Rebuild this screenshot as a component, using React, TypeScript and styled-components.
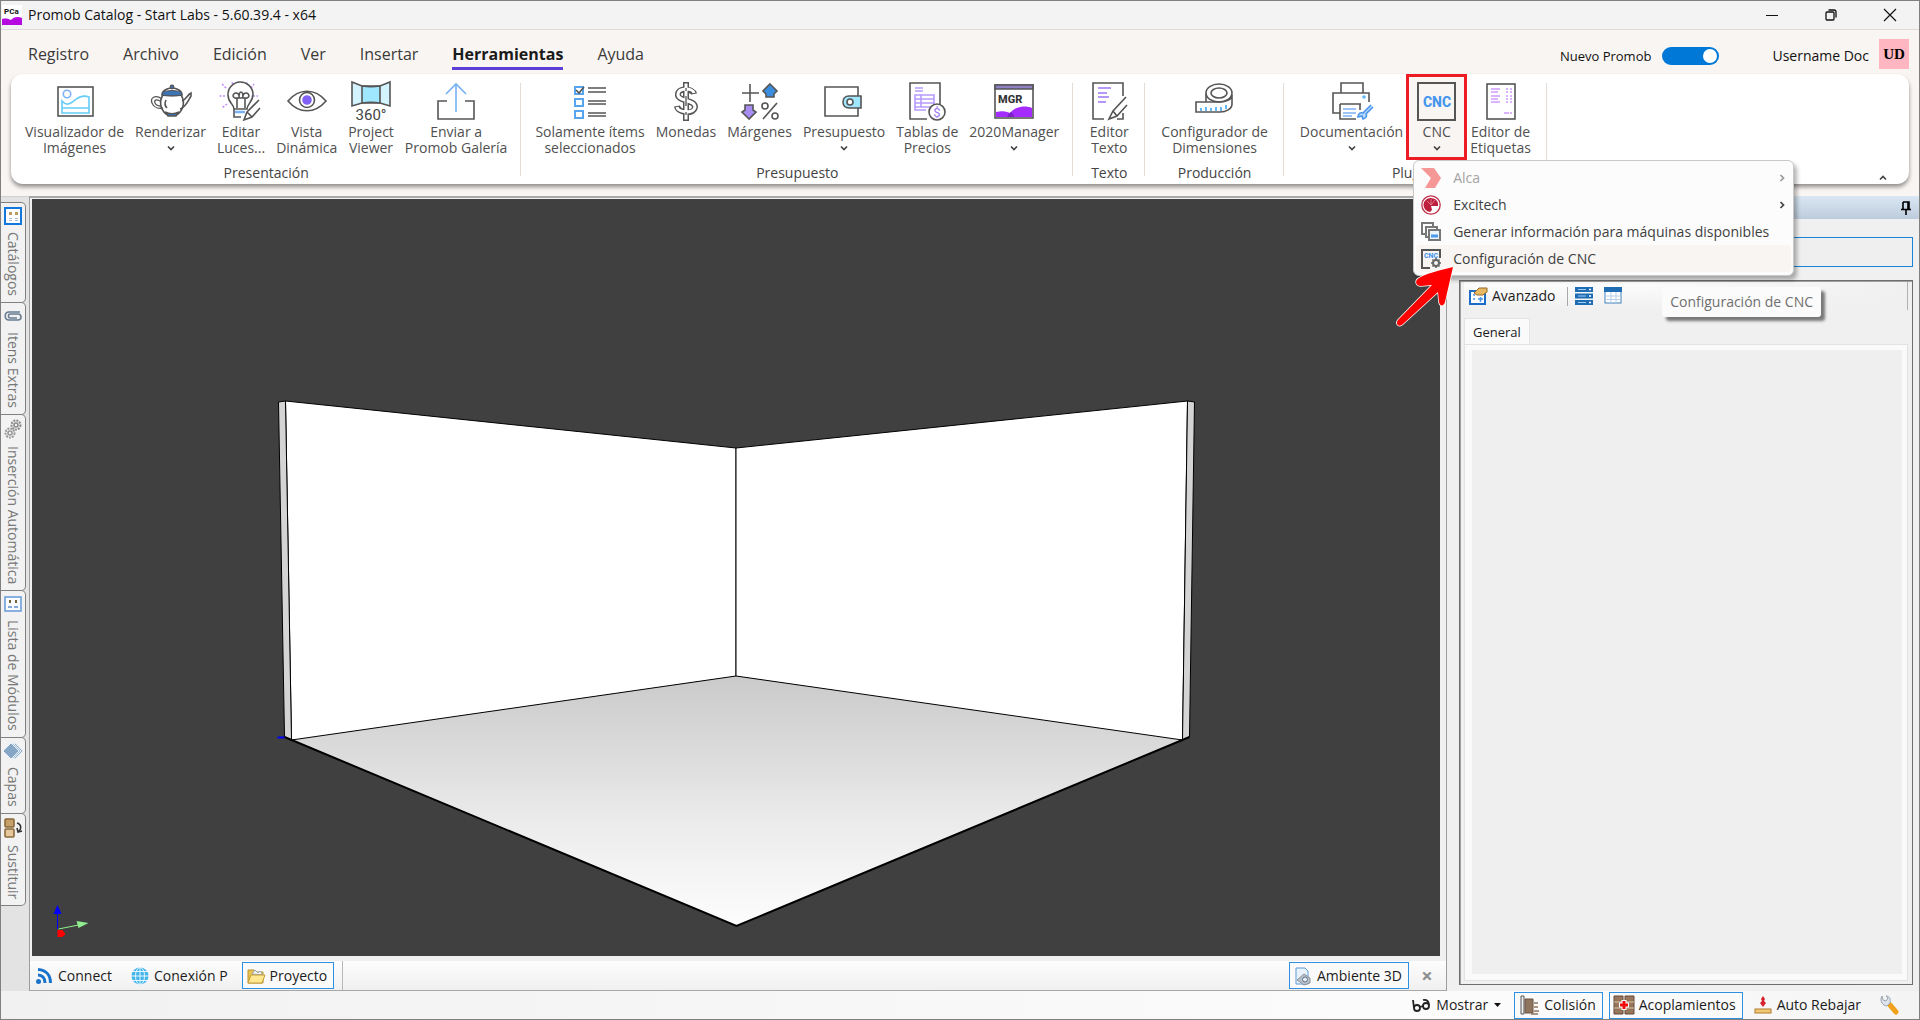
import React from "react";
import styled, { createGlobalStyle, css } from "styled-components";

const GlobalStyle = createGlobalStyle`
  * { box-sizing: border-box; }
  body { margin: 0; font-family: "Open Sans", "Noto Sans", sans-serif; font-size: 14px; color: #1b1b1b; }
  button, input { font: inherit; color: inherit; }
  button { background: none; border: 0; padding: 0; }
  svg { display: block; flex: none; overflow: visible; }
`;

/* ---------- frame ---------- */

const Window = styled.div`
  display: flex;
  flex-direction: column;
  min-height: 100vh;
  border: 1px solid #808080;
  background: #f0f0f0;
  overflow: hidden;
`;

const TitleBar = styled.header`
  display: flex;
  align-items: center;
  height: 29px;
  background: #f3f3f3;
  border-bottom: 1px solid #dcdcdc;
  padding-left: 1px;
`;

const Title = styled.h1`
  flex: 1;
  margin: 0 0 0 6px;
  font-size: 14px;
  line-height: 20px;
  font-weight: 400;
  color: #111;
`;

const WindowButton = styled.button`
  display: flex;
  align-items: center;
  justify-content: center;
  width: 59px;
  height: 28px;
`;

/* ---------- menu bar ---------- */

const RibbonArea = styled.div`
  background: #f9f5f3;
  padding: 0 10px 12px;
`;

const TabRow = styled.nav`
  display: flex;
  align-items: center;
  height: 44px;
  padding: 4px 0 0 17px;
  gap: 34px;
`;

const Tab = styled.a<{ $active?: boolean }>`
  height: 32px;
  padding-top: 2px;
  font-size: 16px;
  line-height: 28px;
  text-decoration: none;
  color: #3b3a39;
  ${(p) =>
    p.$active &&
    css`
      font-weight: 700;
      color: #1b1b1b;
      border-bottom: 3px solid #5b3fd6;
    `}
`;

const Account = styled.div`
  display: flex;
  align-items: center;
  margin-left: auto;
  color: #111;
`;

const SwitchLabel = styled.label`
  display: flex;
  align-items: center;
  gap: 11px;
  margin-right: 53px;
  padding-top: 3px;
  font-size: 13px;
`;

const UserName = styled.span`
  padding-top: 3px;
`;

const Switch = styled.input`
  appearance: none;
  display: flex;
  align-items: center;
  justify-content: flex-end;
  width: 57px;
  height: 18px;
  margin: 0;
  padding: 0 2px;
  border-radius: 9px;
  background: #0078d7;
  &::after {
    content: "";
    width: 14px;
    height: 14px;
    border-radius: 50%;
    background: #fff;
  }
`;

const Avatar = styled.span`
  display: grid;
  place-items: center;
  width: 30px;
  height: 30px;
  margin-left: 10px;
  background: #ffb6c1;
  font-family: "Liberation Serif", serif;
  font-size: 15px;
  font-weight: 700;
  line-height: 18px;
  color: #000;
`;

/* ---------- ribbon ---------- */

const Ribbon = styled.div`
  display: flex;
  position: relative;
  height: 110px;
  padding-right: 20px;
  background: #fff;
  border-radius: 12px;
  box-shadow: 0 3px 4px rgba(0, 0, 0, 0.42);
`;

const Group = styled.section<{ $roomy?: boolean }>`
  display: flex;
  flex-direction: column;
  align-items: center;
  padding: 0 ${(p) => (p.$roomy ? "11px" : "9px")};
  background: linear-gradient(#e6dcd6, #e6dcd6) right 9px / 1px 93px no-repeat;
`;

const GroupItems = styled.div`
  display: flex;
  gap: 1px;
`;

const GroupName = styled.h2`
  margin: 5px 0 0;
  font-size: 14px;
  line-height: 16px;
  font-weight: 400;
  color: #444;
`;

const ToolHolder = styled.div<{ $marked?: boolean }>`
  position: relative;
  margin: 0 ${(p) => (p.$marked ? "-3px" : "0")};
`;

const ToolButton = styled.button<{ $marked?: boolean }>`
  display: flex;
  flex-direction: column;
  align-items: center;
  height: 86px;
  min-width: ${(p) => (p.$marked ? "61px" : "0")};
  padding: 5px 2px 0;
  border: 3px solid ${(p) => (p.$marked ? "#ed1c24" : "transparent")};
  background: ${(p) => (p.$marked ? "#f9f5f3" : "none")};
  font-size: 14px;
  line-height: 16px;
  color: #505050;
`;

const ToolLabel = styled.span`
  margin-top: 2px;
  white-space: pre-line;
`;

const DropMark = styled.span`
  display: grid;
  place-items: center;
  height: 16px;
`;

const Collapse = styled.button`
  align-self: flex-end;
  margin: 0 2px 2px auto;
`;

/* ---------- drop-down ---------- */

const Menu = styled.ul`
  position: absolute;
  z-index: 5;
  left: 7px;
  top: 86px;
  width: 381px;
  margin: 0;
  padding: 3px 2px;
  list-style: none;
  background: #fcfcfc;
  border: 1px solid #c9c9c9;
  border-radius: 6px;
  box-shadow: 3px 4px 4px rgba(0, 0, 0, 0.3);
`;

const MenuItem = styled.button<{ $hot?: boolean; $off?: boolean }>`
  display: flex;
  align-items: center;
  gap: 12px;
  width: 100%;
  height: 27px;
  padding: 0 5px;
  border-radius: 4px;
  text-align: left;
  font-size: 14px;
  background: ${(p) => (p.$hot ? "#f9f5f3" : "none")};
  color: ${(p) => (p.$off ? "#a3a3a3" : "#3f3f3f")};
`;

const MenuText = styled.span`
  flex: 1;
  white-space: nowrap;
`;

const Tooltip = styled.div`
  position: absolute;
  z-index: 6;
  left: 256px;
  top: 213px;
  padding: 5px 8px;
  background: #fbfbfb;
  border-radius: 3px;
  box-shadow: 4px 4px 3px rgba(0, 0, 0, 0.5);
  font-size: 14px;
  line-height: 20px;
  white-space: nowrap;
  color: #6f6f6f;
`;

const Pointer = styled.svg`
  position: absolute;
  z-index: 7;
  left: -12px;
  top: 190px;
`;

/* ---------- body ---------- */

const Body = styled.main`
  display: flex;
  flex: 1;
  min-height: 600px;
`;

const SideBar = styled.div`
  width: 28px;
  flex: none;
  padding-top: 5px;
  background: #e3e3e3;
  border-top: 1px solid #d0d0d0;
`;

const SideTab = styled.button`
  display: flex;
  align-items: center;
  gap: 7px;
  writing-mode: vertical-rl;
  width: 25px;
  padding: 4px 0 6px;
  background: #f2f2f2;
  border: 1px solid #808080;
  border-left: 0;
  border-radius: 0 5px 5px 0;
  margin-bottom: -1px;
  font-size: 14px;
  line-height: 22px;
  color: #777;
`;

const Stage = styled.section`
  display: flex;
  flex-direction: column;
  flex: 1;
  min-width: 0;
  border: 1px solid #9c9c9c;
  border-width: 2px 1px 1px;
  border-color: #a8a8a8 #9c9c9c;
`;

const Viewport = styled.div`
  flex: 1;
  min-height: 0;
  margin: 1px 6px 0 2px;
  background: #404040;
  overflow: hidden;
  svg { width: 100%; height: 756px; }
`;

const DocBar = styled.div`
  display: flex;
  align-items: center;
  height: 34px;
  padding: 5px 0 0;
  background: linear-gradient(#f0f0f0 5px, #fdfdfd 5px, #f0f0f0);
`;

const DocSet = styled.div<{ $edge?: boolean }>`
  display: flex;
  align-items: center;
  gap: 7px;
  height: 29px;
  padding: 0 8px 0 0;
  border-right: ${(p) => (p.$edge ? "1px solid #b8b8b8" : "0")};
`;

const Spacer = styled.div`
  flex: 1;
`;

const BarButton = styled.button<{ $on?: boolean }>`
  display: flex;
  align-items: center;
  gap: 5px;
  height: 27px;
  padding: 0 6px 0 4px;
  border: 1px solid ${(p) => (p.$on ? "#2f8fe0" : "transparent")};
  background: ${(p) => (p.$on ? "#fafafa" : "none")};
  font-size: 14px;
  line-height: 20px;
  white-space: nowrap;
`;

const CloseDoc = styled.button`
  width: 22px;
  height: 24px;
  font-size: 20px;
  line-height: 22px;
  font-weight: 700;
  color: #8d8d8d;
`;

/* ---------- properties panel ---------- */

const Properties = styled.aside`
  display: flex;
  flex-direction: column;
  flex: 0 0 472px;
  padding: 0 0 6px;
`;

const PanelHead = styled.div`
  display: flex;
  align-items: center;
  justify-content: flex-end;
  height: 23px;
  padding-right: 7px;
  margin-left: 6px;
  background: linear-gradient(#dae6f3, #bdccdc);
`;

const SearchBox = styled.input`
  height: 30px;
  margin: 18px 6px 13px 12px;
  border: 1px solid #1883d7;
  background: #efefef;
`;

const PanelBox = styled.div`
  display: flex;
  flex-direction: column;
  flex: 1;
  margin: 0 6px 0 12px;
  padding: 1px 4px 3px;
  border: 1px solid #6e6e6e;
  box-shadow: inset 1px 1px 0 #a0a0a0;
`;

const PanelTools = styled.div`
  display: flex;
  align-items: center;
  height: 28px;
  background: linear-gradient(90deg, rgba(240, 240, 240, 0) 40%, #f0f0f0), linear-gradient(#fdfdfd, #f0f0f0);
  border-right: 1px solid #b0b0b0;
`;

const ToolSep = styled.span`
  width: 1px;
  height: 19px;
  margin: 0 7px 0 4px;
  background: #a8a8a8;
`;

const IconButton = styled.button`
  margin-right: 11px;
`;

const PageTab = styled.button`
  align-self: flex-start;
  height: 26px;
  margin-top: 8px;
  padding: 0 8px;
  background: #fafafa;
  border: 1px solid #e3e3e3;
  border-bottom: 0;
  font-size: 13px;
`;

const PagePane = styled.div`
  flex: 1;
  padding: 5px 5px 6px 7px;
  background: #fafafa;
  border: 1px solid #e3e3e3;
`;

const PageBody = styled.div`
  height: 100%;
  background: #efefef;
`;

/* ---------- status bar ---------- */

const StatusBar = styled.footer`
  display: flex;
  justify-content: flex-end;
  align-items: center;
  gap: 6px;
  height: 28px;
  padding-right: 13px;
  background: linear-gradient(90deg, #f1f1f1, #fcfcfc 80%, #f4f4f4);
`;

/* ---------- icons ---------- */

const S = "#555";
const Ic = ({ children, w = 40, h = 40 }: { children: React.ReactNode; w?: number; h?: number }) => (
  <svg width={w} height={h} viewBox={`0 0 ${w} ${h}`} fill="none" stroke={S} strokeWidth="1.6" aria-hidden="true">
    {children}
  </svg>
);

const ImageIcon = () => (
  <Ic>
    <rect x="3" y="5" width="35" height="29" />
    <circle cx="12" cy="12" r="3.7" stroke="#7db1f7" />
    <path d="M7 19c5 6 9 2 13-1c5-4 9-5 14-3v16H7Z M7 26h27" stroke="#66ccf8" />
  </Ic>
);
const TeapotIcon = () => (
  <Ic>
    <path d="M12 13h18c4 6 3 14-3 19H15C9 27 8 19 12 13Z" />
    <path d="M11 17c-7-5-12-1-10 4c2 5 7 6 11 5M9 19c-4-2-6-1-5 2c1 2 3 3 6 3" strokeWidth="1.3" />
    <path d="M31 19c4-1 5-6 9-8v3c-3 5-5 11-11 13" />
    <path d="M11 13c0-4 5-7 10-7s10 3 10 7c-5 1-15 1-20 0Z" fill="#fff" />
    <path d="M12 10c6-2 12-2 18 0l1 3c-5 1-15 1-20 0Z" fill="#3c74b4" strokeWidth="1" />
    <circle cx="21" cy="5" r="1.8" fill="#3f6ea8" strokeWidth="1.2" />
    <path d="M14 30c4 2 10 2 14 0l-3 4h-8Z" fill="#3c74b4" />
    <path d="M15 18c-2 4-1 6 1 8" />
  </Ic>
);
const BulbIcon = () => (
  <Ic>
    <path d="M4 14H-2M5 6L1 2M12 2l-2-3M32 14h5M30 6l3-4M25 2l2-3M6 22l-5 4" stroke="#c48bff" strokeDasharray="2 1.5" />
    <path d="M13 27c0-5-6-6-6-14a12 12 0 0 1 25-1c0 8-6 10-6 15Z" />
    <path d="M16 26V16c-5 1-5-5-1-5s3 5 3 5s0-6 2-6s2 6 2 6s-1-5 3-5s4 6-1 5v10M14 16h12" />
    <path d="M14 30h10" stroke="#7db1f7" strokeWidth="2.5" />
    <path d="M13 27v8h7" />
    <path d="M38 18L26 30l-3 8l8-3l8-9M26 30l5 5" fill="#fff" />
  </Ic>
);
const EyeIcon = () => (
  <Ic>
    <path d="M1 19c11-13 27-13 38 0c-11 13-27 13-38 0Z" />
    <circle cx="20" cy="18" r="7.5" />
    <circle cx="20" cy="18" r="4" fill="#8161f5" stroke="#8161f5" />
  </Ic>
);
const ViewerIcon = () => (
  <Ic>
    <path d="M1 0l10 4h18l10-4v24l-10-3H11L1 24Z" fill="#d3f3ff" />
    <path d="M11 4c6 1 12 1 18 0v17c-6-1-12-1-18 0Z" fill="#9fe6ff" />
    <text x="20" y="38" textAnchor="middle" fill="#444" stroke="none" fontFamily="Roboto" fontSize="15">360°</text>
  </Ic>
);
const UploadIcon = () => (
  <Ic>
    <path d="M11 19H2v18h36V19h-9" />
    <path d="M20 30V2M10 12L20 2l10 10" stroke="#78b1f2" />
  </Ic>
);
const ChecksIcon = () => (
  <Ic>
    <path d="M5 5h8v7H5ZM5 17h8v7H5ZM5 29h8v7H5Z" stroke="#56a5ee" strokeWidth="2" />
    <path d="M6 8l3 3l5-6" />
    <path d="M18 6h18M18 10h18M18 19h18M18 22h18M18 31h18M18 34h18" />
  </Ic>
);
const DollarIcon = () => (
  <Ic>
    <g stroke="#555" strokeWidth="6">
      <path d="M28 12c-1-5-15-7-16 0c-1 8 17 5 17 13c-1 8-17 6-18-1M20 0v39" />
    </g>
    <g stroke="#fff" strokeWidth="3">
      <path d="M28 11c-1-5-15-6-16 1c-1 8 17 5 17 13c-1 7-17 6-18 0M20 1.5v36" />
    </g>
    <path d="M20 14v10M20 6v3M20 30v3" strokeWidth="1.3" />
  </Ic>
);
const MarginsIcon = () => (
  <Ic>
    <path d="M10 2v18M2 11h17" />
    <path d="M30 2l7 7l-3 3v3h-8v-3l-3-3Z" fill="#3b8de0" />
    <path d="M9 37l-7-7l3-2v-5h8v5l3 2Z" fill="#a78df2" />
    <path d="M37 21L23 37" />
    <circle cx="25" cy="24" r="3" />
    <circle cx="35" cy="34" r="3" />
  </Ic>
);
const WalletIcon = () => (
  <Ic>
    <path d="M34 14V5H1v29h33V26" />
    <path d="M37 14H25c-8 0-8 12 0 12h12Z" fill="#9fe6ff" />
    <circle cx="26" cy="20" r="3" fill="#fff" />
  </Ic>
);
const PriceIcon = () => (
  <Ic>
    <path d="M33 22V1H3v36h17" />
    <path d="M8 6h8M8 9h8" stroke="#b79bff" />
    <path d="M8 13h19v12H8ZM8 17h19M8 21h19M8 25v3h11M14 13v12" stroke="#b79bff" />
    <circle cx="30" cy="30" r="8" fill="#fff" />
    <text x="30" y="35" textAnchor="middle" fill="#9b77f5" stroke="none" fontSize="13" fontFamily="Roboto">$</text>
  </Ic>
);
const ManagerIcon = () => (
  <Ic>
    <rect x="1" y="3" width="38" height="33" />
    <path d="M1 3h38v4H1Z" fill="#8f80c5" />
    <path d="M2 30c8-2 12 0 14 1c7-8 17-7 22-5v9H2Z" fill="#a42cff" stroke="none" />
    <path d="M13 35c1-2 2-4 4-5c2 2 3 3 3 5Z" fill="#7a1fc9" stroke="none" />
    <text x="4" y="21" fill="#333" stroke="none" fontFamily="Roboto" fontWeight="800" fontSize="11">MGR</text>
  </Ic>
);
const TextIcon = () => (
  <Ic>
    <path d="M34 14V1H4v36h11M28 37h6v-6" />
    <path d="M9 6h13M9 11h9M9 15h11M9 20h8" stroke="#9b77f5" />
    <path d="M37 15L24 29l-4 8l8-3l10-11M24 29l4 5" />
  </Ic>
);
const TapeIcon = () => (
  <Ic>
    <path d="M1 20h24c5 0 12-2 12-7v9c0 5-6 8-12 8H1Z" />
    <ellipse cx="24" cy="11" rx="13" ry="9" />
    <ellipse cx="24" cy="11" rx="8" ry="5" />
    <path d="M11 12v8" />
    <path d="M6 29v-3M11 29v-4M16 29v-3M21 29v-4M26 29v-4M31 27v-4" stroke="#3ba8f0" />
  </Ic>
);
const PrinterIcon = () => (
  <Ic>
    <path d="M9 11V1h22v10M8 31H1V11h36v9M8 22h21M8 22v15h16M28 22v6" />
    <circle cx="32" cy="15" r="1" stroke="#5ab7f5" />
    <path d="M11 27h13M11 31h13M11 34h9" stroke="#7db1f7" />
    <path d="M39 23l-8 8c-3-1-5 1-5 4l4-1l1 3c4-1 4-4 3-5l7-7" fill="#b9dbff" stroke="#4b94e8" />
  </Ic>
);
const CncIcon = () => (
  <Ic>
    <rect x="1" y="1" width="37" height="37" strokeWidth="2" />
    <text x="20" y="25" textAnchor="middle" fill="#4596ec" stroke="none" fontFamily="Roboto" fontWeight="800" fontSize="14">CNC</text>
  </Ic>
);
const LabelsIcon = () => (
  <Ic>
    <rect x="6" y="2" width="28" height="35" />
    <path d="M10 7h9M10 10h7M10 14h9M10 17h7M10 20h9M25 7h2M29 7h2M25 10h2M29 10h2M25 14h2M29 14h2M25 17h2M29 17h2M25 20h2M29 20h2M23 31h5M29 31h2" stroke="#cf9bff" />
  </Ic>
);
const Chevron = ({ up, side, c = "#444" }: { up?: boolean; side?: boolean; c?: string }) => (
  <svg width="8" height="8" viewBox="0 0 8 8" fill="none" stroke={c} strokeWidth="1.7" aria-hidden="true">
    <path d={side ? "M2.5 1L5.5 4L2.5 7" : up ? "M1 5.5L4 2.5L7 5.5" : "M1 2.5L4 5.5L7 2.5"} />
  </svg>
);

const AlcaIcon = () => (
  <Ic w={20} h={20}><path d="M0 0h13l7 10l-6 10H4l6-10Z" fill="#f69797" stroke="none" /></Ic>
);
const ExcitechIcon = () => (
  <Ic w={20} h={20}>
    <circle cx="10" cy="10" r="9.2" stroke="#c2314b" strokeWidth="1.3" />
    <path d="M10 3a7 7 0 1 0-1 14l2-2l-1-4h7a7 7 0 0 0-3-7Z" fill="#bd1e3c" stroke="none" />
    <path d="M10 10L6 6M10 10l4-5M10 10V4" stroke="#e79aa8" strokeWidth="0.7" />
  </Ic>
);
const StackIcon = () => (
  <Ic w={20} h={20}>
    <path d="M4 12H1V1h11v3M8 15H5V5h11v3" stroke="#777" strokeWidth="2" />
    <rect x="8" y="8" width="11" height="10" fill="#eaf4ff" stroke="#777" strokeWidth="2" />
    <path d="M10 14h7" stroke="#4c9bea" strokeWidth="3" />
  </Ic>
);
const CncGearIcon = () => (
  <Ic w={20} h={20}>
    <path d="M9 19H1V1h18v8" strokeWidth="2" />
    <text x="10" y="9" textAnchor="middle" fill="#4596ec" stroke="none" fontFamily="Roboto" fontWeight="800" fontSize="7">CNC</text>
    <circle cx="15" cy="14" r="3" stroke="#666" strokeWidth="2" />
    <path d="M15 9v2M15 17v2M10 14h2M18 14h2M11.5 10.5l1 1M17 16l1.5 1.5M18.5 10.5L17 12M13 16l-1.5 1.5" stroke="#666" />
  </Ic>
);

const CatalogIcon = () => (
  <Ic w={18} h={18}>
    <rect x="1" y="1" width="16" height="16" fill="#fff" stroke="#1277dc" strokeWidth="2" />
    <path d="M5 5h3v3H5ZM11 5h3v3h-3Z" fill="#b79c5e" stroke="none" />
    <path d="M5 11.5h3M5 13.5h3M11 11.5h3M11 13.5h3" stroke="#a8bcd0" strokeWidth="1" />
  </Ic>
);
const ClipIcon = () => (
  <Ic w={18} h={18}>
    <path d="M16 5H5C0 5 0 13 5 13h9c4 0 4-6 0-6H6c-2 0-2 4 0 4h7" stroke="#6a7d92" />
  </Ic>
);
const GearsIcon = () => (
  <Ic w={18} h={20}>
    <circle cx="12" cy="6" r="4.5" stroke="#8b8b8b" strokeWidth="2" strokeDasharray="2 1" />
    <circle cx="12" cy="6" r="2" stroke="#8b8b8b" />
    <circle cx="6" cy="14" r="4.5" stroke="#999" strokeWidth="2" strokeDasharray="2 1" />
    <circle cx="6" cy="14" r="2" stroke="#999" />
  </Ic>
);
const ListIcon = () => (
  <Ic w={18} h={18}>
    <rect x="1" y="2" width="16" height="14" fill="#f8fbff" stroke="#6d9edb" />
    <path d="M5 5h2v3H5ZM11 5h2v3h-2Z" fill="#75643c" stroke="none" />
    <path d="M4 12h4M10 12h4" stroke="#5d8ecb" />
  </Ic>
);
const LayersIcon = () => (
  <Ic w={18} h={18}>
    <path d="M11 1l8 8l-8 8l-8-8Z" fill="#90adcb" stroke="#dfe9f2" strokeWidth="1" />
    <path d="M9 1l8 8l-8 8l-8-8Z" fill="#a9c1d9" stroke="#e7eff6" strokeWidth="1" />
    <path d="M7 1l8 8l-8 8l-8-8Z" fill="#86a6c6" stroke="#e7eff6" strokeWidth="1" />
  </Ic>
);
const SwapIcon = () => (
  <Ic w={20} h={20}>
    <rect x="2" y="1" width="9" height="8" rx="1" fill="#c6a06a" stroke="#8b6a3a" />
    <rect x="2" y="11" width="9" height="8" rx="1" fill="#e4c79a" stroke="#8b6a3a" />
    <path d="M14 5c4 1 5 5 2 8M14 10l1 4l4-1" stroke="#333" />
  </Ic>
);
const ConnectIcon = () => (
  <Ic w={18} h={18}>
    <circle cx="3.5" cy="14.5" r="2.5" fill="#1873cc" stroke="none" />
    <path d="M3 8c4 0 7 3 7 8M3 2.5C11 3 15.5 8 15.5 16" stroke="#1873cc" strokeWidth="3" />
  </Ic>
);
const GlobeIcon = () => (
  <Ic w={18} h={18}>
    <circle cx="9" cy="9" r="8.5" fill="#42b4ea" stroke="none" />
    <path d="M9 0v18M0 9h18M2 4.5h14M2 13.5h14" stroke="#e6f7ff" strokeWidth="1" />
    <ellipse cx="9" cy="9" rx="4.5" ry="8.5" stroke="#e6f7ff" strokeWidth="1" />
  </Ic>
);
const FolderIcon = () => (
  <Ic w={18} h={18}>
    <path d="M1 16V3h6l2 2h7v11Z" fill="#e9c452" stroke="#b8912f" strokeWidth="1" />
    <path d="M5 7l3-4l3 3l2-2l3 4Z" fill="#f3f6f9" stroke="#9ba5af" strokeWidth="1" />
    <path d="M1 16l3-8h14l-3 8Z" fill="#ffe88f" stroke="#c49c35" strokeWidth="1" />
  </Ic>
);
const AmbientIcon = () => (
  <Ic w={18} h={18}>
    <path d="M2 1h9l3 3v13H2Z" fill="#e9f3fd" stroke="#5c9bd9" strokeWidth="1" />
    <path d="M3 13l7-6l6 4v5l-6 2Z" fill="#b9c0c8" stroke="#8a939c" strokeWidth="1" />
    <circle cx="11" cy="12.5" r="2.5" fill="#e7edf3" stroke="#56718b" strokeWidth="1" />
  </Ic>
);
const GlassesIcon = () => (
  <Ic w={20} h={18}>
    <g stroke="#222" strokeWidth="1.8">
      <circle cx="6" cy="12" r="3" />
      <circle cx="15" cy="10" r="3" />
      <path d="M2 4l1 8M9 11l3-1M12 4c4-1 6 2 6 5" />
    </g>
  </Ic>
);
const CollisionIcon = () => (
  <Ic w={20} h={20}>
    <path d="M2 1h3v18H2Z" fill="#eee" strokeWidth="1" />
    <path d="M6 4h8v14H6Z" fill="#8f755e" stroke="#6a5342" strokeWidth="1" />
    <path d="M15 8h4M15 12h4M15 16h5M12 19h7" stroke="#8f755e" />
  </Ic>
);
const JoinIcon = () => (
  <Ic w={20} h={20}>
    <path d="M0 1h9v18H0ZM11 1h9v18h-9Z" fill="#97765b" stroke="#65493a" strokeWidth="1" />
    <path d="M0 7h9M0 13h9M11 7h9M11 13h9" stroke="#d9c2aa" strokeWidth="1" />
    <path d="M10 5v10M5 10h10" stroke="#fff" strokeWidth="5" />
    <path d="M10 6v8M6 10h8" stroke="#f20d0d" strokeWidth="3" />
  </Ic>
);
const LowerIcon = () => (
  <Ic w={18} h={20}>
    <path d="M9 1l2 3l-1 2l2 2l-3 4l-3-4l2-2L7 4Z" fill="#d6232b" stroke="none" />
    <rect x="1" y="14" width="16" height="4" fill="#f1c976" stroke="#b07a2a" strokeWidth="1" />
  </Ic>
);
const WrenchIcon = () => (
  <Ic w={20} h={20}>
    <path d="M11 10l6 7" stroke="#f0a21c" strokeWidth="5" strokeLinecap="round" />
    <path d="M3 1l1 4l3 1l2-3l-2-2c4 0 5 4 4 7l-3 3c-4 0-8-5-5-10Z" fill="#dde3ea" stroke="#98a3af" strokeWidth="1" />
  </Ic>
);
const AdvancedIcon = () => (
  <Ic w={18} h={18}>
    <path d="M1 4h15v13H1Z" fill="#fff" stroke="#1b6ec8" strokeWidth="2" />
    <path d="M4 8h2M4 12h2M9 12h5M11.5 10v5" stroke="#4b94e8" />
    <path d="M5 6l5-5h8v4l-4 3H8Z" fill="#e8b963" stroke="#94662a" strokeWidth="1" />
  </Ic>
);
const RowsIcon = () => (
  <Ic w={18} h={18}>
    <path d="M0 0h18v5H0ZM0 6.5h18v5H0ZM0 13h18v5H0Z" fill="#1f6cb5" stroke="none" />
    <path d="M3 2.5h8M3 9h8M3 15.5h8" stroke="#9fd0f5" strokeWidth="1" />
    <path d="M14 2.5h2M14 9h2M14 15.5h2" stroke="#fff" />
  </Ic>
);
const GridIcon = () => (
  <Ic w={18} h={18}>
    <rect x="1" y="1" width="16" height="15" fill="#fff" stroke="#3f7fbe" strokeWidth="1" />
    <path d="M0 0h18v5H0Z" fill="#1f6cb5" stroke="none" />
    <path d="M7 5v11M12 5v11M1 9h16M1 12.5h16" stroke="#b5cfe8" strokeWidth="1" />
  </Ic>
);
const PinIcon = () => (
  <Ic w={12} h={14}>
    <path d="M3 1h6v7M3 1v7M1 8.5h10M6 9v5M8 1v7" stroke="#000" />
  </Ic>
);
const LogoIcon = () => (
  <Ic w={20} h={20}>
    <rect width="20" height="20" fill="#fff" stroke="none" />
    <path d="M0 14c4-1 7 0 9 1c4-4 8-3 11-2v7H0Z" fill="#b50be0" stroke="none" />
    <text x="2" y="9" fill="#222" stroke="none" fontFamily="Roboto" fontWeight="800" fontSize="8">PCa</text>
  </Ic>
);

const Scene = () => (
  <svg viewBox="32 199 1407 756" preserveAspectRatio="xMidYMin meet" fill="none" stroke="#000" aria-label="Vista 3D">
    <defs>
      <linearGradient id="floor" x1="0" y1="0" x2="0" y2="1">
        <stop offset="0" stopColor="#cacaca" />
        <stop offset="0.6" stopColor="#ececec" />
        <stop offset="1" stopColor="#fdfdfd" />
      </linearGradient>
    </defs>
    <path d="M290 739L735.5 676L1183 739L736 926Z" fill="url(#floor)" stroke="none" />
    <path d="M285 401L735.5 448V676L291 740Z" fill="#fff" />
    <path d="M1187 401L735.5 448V676L1182 740Z" fill="#fff" />
    <path d="M278 402L285 401L291 740L284 737Z" fill="#d4d4d4" />
    <path d="M1194 402L1187 401L1182 740L1189 737Z" fill="#d4d4d4" />
    <path d="M284 737L736 926L1189 737" strokeWidth="2" />
    <path d="M277 737.5h7" stroke="#00f" strokeWidth="2" />
    <g>
      <path d="M57 929V912" stroke="#00f" />
      <path d="M57 905l4 9h-8Z" fill="#00f" stroke="none" />
      <path d="M58 929l20-4" stroke="#90ee90" />
      <path d="M76 921l12 2l-10 5Z" fill="#90ee90" stroke="none" />
      <path d="M57 930h5l3 4l-3 3h-5Z" fill="#f00" stroke="none" />
    </g>
  </svg>
);

/* ---------- data ---------- */

type Tool = { label: string; icon: React.ComponentType; drop?: boolean; open?: boolean };

const groups: { name: string; roomy?: boolean; tools: Tool[] }[] = [
  {
    name: "Presentación",
    tools: [
      { label: "Visualizador de\nImágenes", icon: ImageIcon },
      { label: "Renderizar", icon: TeapotIcon, drop: true },
      { label: "Editar\nLuces...", icon: BulbIcon },
      { label: "Vista\nDinámica", icon: EyeIcon },
      { label: "Project\nViewer", icon: ViewerIcon },
      { label: "Enviar a\nPromob Galería", icon: UploadIcon },
    ],
  },
  {
    name: "Presupuesto",
    tools: [
      { label: "Solamente ítems\nseleccionados", icon: ChecksIcon },
      { label: "Monedas", icon: DollarIcon },
      { label: "Márgenes", icon: MarginsIcon },
      { label: "Presupuesto", icon: WalletIcon, drop: true },
      { label: "Tablas de\nPrecios", icon: PriceIcon },
      { label: "2020Manager", icon: ManagerIcon, drop: true },
    ],
  },
  { name: "Texto", roomy: true, tools: [{ label: "Editor\nTexto", icon: TextIcon }] },
  { name: "Producción", roomy: true, tools: [{ label: "Configurador de\nDimensiones", icon: TapeIcon }] },
  {
    name: "Plugins",
    roomy: true,
    tools: [
      { label: "Documentación", icon: PrinterIcon, drop: true },
      { label: "CNC", icon: CncIcon, drop: true, open: true },
      { label: "Editor de\nEtiquetas", icon: LabelsIcon },
    ],
  },
];

const tabs = ["Registro", "Archivo", "Edición", "Ver", "Insertar", "Herramientas", "Ayuda"];

const sideTabs: [string, React.ComponentType][] = [
  ["Catálogos", CatalogIcon],
  ["Itens Extras", ClipIcon],
  ["Inserción Automática", GearsIcon],
  ["Lista de Módulos", ListIcon],
  ["Capas", LayersIcon],
  ["Sustituir", SwapIcon],
];

const CncMenu = () => (
  <>
    <Menu>
      <li><MenuItem $off disabled><AlcaIcon /><MenuText>Alca</MenuText><Chevron side c="#999" /></MenuItem></li>
      <li><MenuItem><ExcitechIcon /><MenuText>Excitech</MenuText><Chevron side /></MenuItem></li>
      <li><MenuItem><StackIcon /><MenuText>Generar información para máquinas disponibles</MenuText></MenuItem></li>
      <li><MenuItem $hot><CncGearIcon /><MenuText>Configuración de CNC</MenuText></MenuItem></li>
    </Menu>
    <Tooltip role="tooltip">Configuración de CNC</Tooltip>
    <Pointer width="64" height="66" viewBox="0 0 64 66" aria-hidden="true">
      <path
        d="M59 3C46 6 31 10 25 14c-5 3-3 8 2 8l11-1L4 56c-3 4 1 8 5 4L44 28l1 10c1 5 5 4 6 0Z"
        fill="#f00" stroke="#fff" strokeWidth="1.5" strokeLinejoin="round" paintOrder="stroke"
      />
    </Pointer>
  </>
);

export default function App() {
  return (
    <Window>
      <GlobalStyle />
      <TitleBar>
        <LogoIcon />
        <Title>Promob Catalog - Start Labs - 5.60.39.4 - x64</Title>
        <WindowButton aria-label="Minimizar">
          <svg width="12" height="12" stroke="#111"><path d="M0 6.5h12" /></svg>
        </WindowButton>
        <WindowButton aria-label="Restaurar">
          <svg width="12" height="12" fill="none" stroke="#111" strokeWidth="1.3">
            <rect x="1" y="3" width="8" height="8" rx="1" /><path d="M3.5 1H9a2 2 0 0 1 2 2v5.5" />
          </svg>
        </WindowButton>
        <WindowButton aria-label="Cerrar">
          <svg width="12" height="12" stroke="#111" strokeWidth="1.2"><path d="M0 0L12 12M12 0L0 12" /></svg>
        </WindowButton>
      </TitleBar>

      <RibbonArea>
        <TabRow>
          {tabs.map((t) => (
            <Tab key={t} href="#" $active={t === "Herramientas"}>{t}</Tab>
          ))}
          <Account>
            <SwitchLabel>
              Nuevo Promob
              <Switch type="checkbox" role="switch" defaultChecked />
            </SwitchLabel>
            <UserName>Username Doc</UserName>
            <Avatar>UD</Avatar>
          </Account>
        </TabRow>
        <Ribbon>
          {groups.map((g) => (
            <Group key={g.name} $roomy={g.roomy}>
              <GroupItems>
                {g.tools.map(({ label, icon: Icon, drop, open }) => (
                  <ToolHolder key={label} $marked={open}>
                    <ToolButton $marked={open}>
                      <Icon />
                      <ToolLabel>{label}</ToolLabel>
                      {drop && <DropMark><Chevron /></DropMark>}
                    </ToolButton>
                    {open && <CncMenu />}
                  </ToolHolder>
                ))}
              </GroupItems>
              <GroupName>{g.name}</GroupName>
            </Group>
          ))}
          <Collapse aria-label="Contraer"><Chevron up /></Collapse>
        </Ribbon>
      </RibbonArea>

      <Body>
        <SideBar>
          {sideTabs.map(([name, Icon]) => (
            <SideTab key={name}><Icon />{name}</SideTab>
          ))}
        </SideBar>
        <Stage>
          <Viewport><Scene /></Viewport>
          <DocBar>
            <DocSet $edge>
              <BarButton><ConnectIcon />Connect</BarButton>
              <BarButton><GlobeIcon />Conexión P</BarButton>
              <BarButton $on><FolderIcon />Proyecto</BarButton>
            </DocSet>
            <Spacer />
            <DocSet>
              <BarButton $on><AmbientIcon />Ambiente 3D</BarButton>
              <CloseDoc aria-label="Cerrar ambiente">×</CloseDoc>
            </DocSet>
          </DocBar>
        </Stage>
        <Properties>
          <PanelHead><button aria-label="Fijar panel"><PinIcon /></button></PanelHead>
          <SearchBox aria-label="Buscar" />
          <PanelBox>
            <PanelTools>
              <BarButton><AdvancedIcon />Avanzado</BarButton>
              <ToolSep />
              <IconButton aria-label="Filas"><RowsIcon /></IconButton>
              <IconButton aria-label="Tabla"><GridIcon /></IconButton>
            </PanelTools>
            <PageTab>General</PageTab>
            <PagePane><PageBody /></PagePane>
          </PanelBox>
        </Properties>
      </Body>

      <StatusBar>
        <BarButton>
          <GlassesIcon />Mostrar
          <svg width="8" height="6" viewBox="0 0 8 6"><path d="M1 1h7l-3.5 4Z" fill="#111" /></svg>
        </BarButton>
        <BarButton $on><CollisionIcon />Colisión</BarButton>
        <BarButton $on><JoinIcon />Acoplamientos</BarButton>
        <BarButton><LowerIcon />Auto Rebajar</BarButton>
        <BarButton aria-label="Herramientas"><WrenchIcon /></BarButton>
      </StatusBar>
    </Window>
  );
}
